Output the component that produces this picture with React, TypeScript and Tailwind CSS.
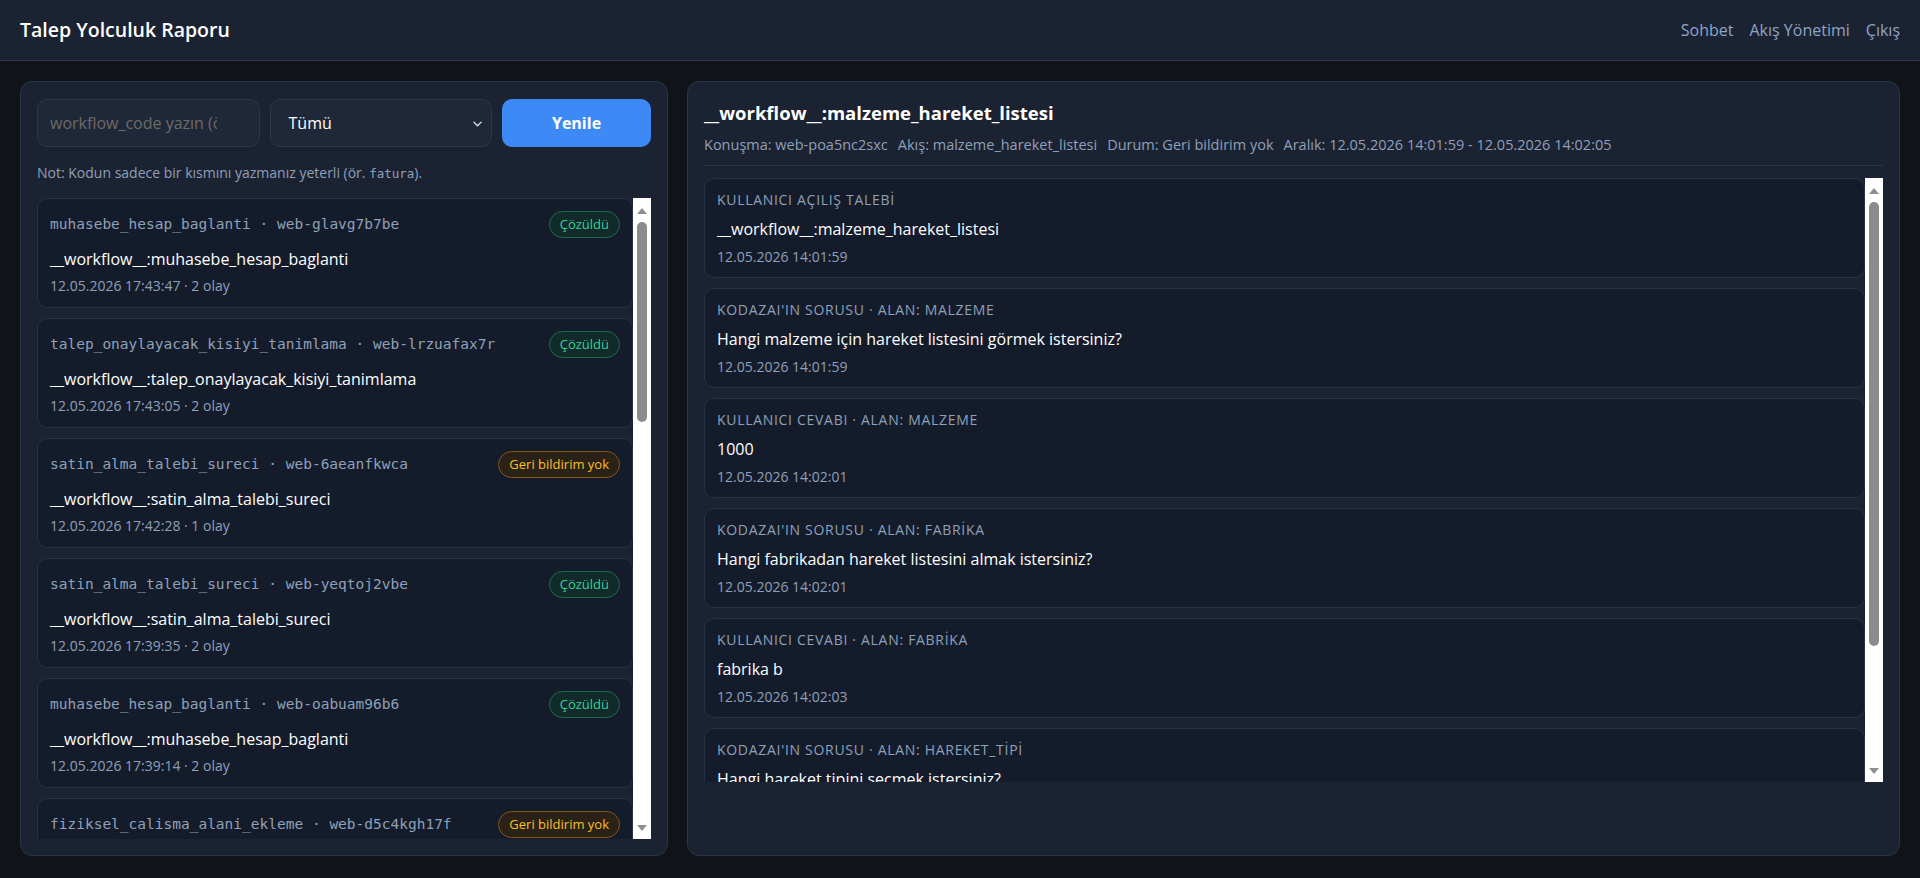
import React from 'react';

type Session = {
  code: string;
  conv: string;
  status: 'ok' | 'none';
  title: string;
  meta: string;
};

const sessions: Session[] = [
  { code: 'muhasebe_hesap_baglanti', conv: 'web-glavg7b7be', status: 'ok', title: '__workflow__:muhasebe_hesap_baglanti', meta: '12.05.2026 17:43:47 · 2 olay' },
  { code: 'talep_onaylayacak_kisiyi_tanimlama', conv: 'web-lrzuafax7r', status: 'ok', title: '__workflow__:talep_onaylayacak_kisiyi_tanimlama', meta: '12.05.2026 17:43:05 · 2 olay' },
  { code: 'satin_alma_talebi_sureci', conv: 'web-6aeanfkwca', status: 'none', title: '__workflow__:satin_alma_talebi_sureci', meta: '12.05.2026 17:42:28 · 1 olay' },
  { code: 'satin_alma_talebi_sureci', conv: 'web-yeqtoj2vbe', status: 'ok', title: '__workflow__:satin_alma_talebi_sureci', meta: '12.05.2026 17:39:35 · 2 olay' },
  { code: 'muhasebe_hesap_baglanti', conv: 'web-oabuam96b6', status: 'ok', title: '__workflow__:muhasebe_hesap_baglanti', meta: '12.05.2026 17:39:14 · 2 olay' },
  { code: 'fiziksel_calisma_alani_ekleme', conv: 'web-d5c4kgh17f', status: 'none', title: '__workflow__:fiziksel_calisma_alani_ekleme', meta: '12.05.2026 17:38:02 · 1 olay' },
];

const events = [
  { label: 'KULLANICI AÇILIŞ TALEBİ', text: '__workflow__:malzeme_hareket_listesi', at: '12.05.2026 14:01:59' },
  { label: "KODAZAI'IN SORUSU · ALAN: MALZEME", text: 'Hangi malzeme için hareket listesini görmek istersiniz?', at: '12.05.2026 14:01:59' },
  { label: 'KULLANICI CEVABI · ALAN: MALZEME', text: '1000', at: '12.05.2026 14:02:01' },
  { label: "KODAZAI'IN SORUSU · ALAN: FABRİKA", text: 'Hangi fabrikadan hareket listesini almak istersiniz?', at: '12.05.2026 14:02:01' },
  { label: 'KULLANICI CEVABI · ALAN: FABRİKA', text: 'fabrika b', at: '12.05.2026 14:02:03' },
  { label: "KODAZAI'IN SORUSU · ALAN: HAREKET_TİPİ", text: 'Hangi hareket tipini seçmek istersiniz?', at: '12.05.2026 14:02:05' },
];

// classic light scrollbar drawn next to the clipped lists
const Rail = ({ thumb }: { thumb: string }) => (
  <div className="w-[18px] shrink-0 bg-white flex flex-col items-center">
    <svg width="10" height="6" viewBox="0 0 10 6" className="mt-[10px]">
      <polygon points="0,6 5,0 10,6" fill="#8f8f8f" />
    </svg>
    <div className={`mt-[8px] w-[10px] rounded-full bg-[#8c8c8c] ${thumb}`} />
    <div className="flex-1" />
    <svg width="10" height="6" viewBox="0 0 10 6" className="mb-[8px]">
      <polygon points="0,0 10,0 5,6" fill="#8f8f8f" />
    </svg>
  </div>
);

const Badge = ({ status }: { status: Session['status'] }) =>
  status === 'ok' ? (
    <span className="h-[27px] px-[10px] flex items-center rounded-full border border-[#1f6b50] bg-[#112a2a] text-[#34d399] text-[13px]">
      Çözüldü
    </span>
  ) : (
    <span className="h-[27px] px-[10px] flex items-center rounded-full border border-[#86561d] bg-[#2a2217] text-[#fbbf24] text-[13px]">
      Geri bildirim yok
    </span>
  );

export default function App() {
  return (
    <div className="h-[878px] flex flex-col bg-[#101418] font-['Open_Sans','Noto_Sans',sans-serif] text-white overflow-hidden">
      <header className="h-[61px] shrink-0 flex items-center justify-between px-5 bg-[#1b2232] border-b border-[#2b3650]">
        <h1 className="text-[19.5px] font-semibold">Talep Yolculuk Raporu</h1>
        <nav className="flex items-center gap-4 text-[16px] text-[#8ea5c8]">
          <a>Sohbet</a>
          <a>Akış Yönetimi</a>
          <a>Çıkış</a>
        </nav>
      </header>

      <main className="flex-1 min-h-0 grid grid-cols-[648px_1fr] gap-[19px] px-5 pt-5 pb-[22px]">
        {/* sessions */}
        <section className="min-h-0 flex flex-col rounded-xl border border-[#2b3548] bg-[#1b2232] px-4 pt-[17px] pb-4">
          <div className="grid grid-cols-[1fr_1fr_149px] gap-[10px]">
            <input
              placeholder="workflow_code yazın (ör. fatura)"
              className="h-12 min-w-0 rounded-[10px] border border-[#2c3749] bg-[#1f2839] pl-3 pr-[42px] text-[16px] text-white outline-none placeholder:text-[#6f6a66]"
            />
            <div className="h-12 flex items-center justify-between rounded-[10px] border border-[#2c3749] bg-[#1f2839] pl-[18px] pr-[8px] text-[16px]">
              <span>Tümü</span>
              <svg width="11" height="11" viewBox="0 0 12 12" fill="none">
                <path d="M2 4.5 6 8.5 10 4.5" stroke="#e5e7eb" strokeWidth="1.4" strokeLinecap="round" strokeLinejoin="round" />
              </svg>
            </div>
            <button className="h-12 rounded-[10px] bg-[#3d8af7] text-[16px] font-bold">Yenile</button>
          </div>

          <p className="mt-4 text-[14px] leading-5 text-[#8fa0b8]">
            Not: Kodun sadece bir kısmını yazmanız yeterli (ör.{' '}
            <code className="font-['DejaVu_Sans_Mono',monospace] text-[12.5px]">fatura</code>).
          </p>

          <div className="mt-[14px] flex-1 min-h-0 flex">
            <div className="flex-1 min-w-0 overflow-hidden flex flex-col gap-[10px]">
              {sessions.map((s, i) => (
                <div key={i} className="shrink-0 h-[110px] rounded-[10px] border border-[#273246] bg-[#141c2b] px-3 pt-3">
                  <div className="h-[27px] flex items-center justify-between">
                    <span className="font-['DejaVu_Sans_Mono',monospace] text-[14.5px] text-[#8fa0b8]">
                      {s.code} · {s.conv}
                    </span>
                    <Badge status={s.status} />
                  </div>
                  <div className="mt-[9px] text-[16px] leading-6">{s.title}</div>
                  <div className="mt-[5px] text-[14px] leading-5 text-[#8fa0b8]">{s.meta}</div>
                </div>
              ))}
            </div>
            <Rail thumb="h-[200px]" />
          </div>
        </section>

        {/* journey detail */}
        <section className="min-h-0 flex flex-col rounded-xl border border-[#2b3548] bg-[#1b2232] px-4 pt-[17px] pb-4">
          <h2 className="text-[18.5px] leading-7 font-bold">__workflow__:malzeme_hareket_listesi</h2>
          <div className="mt-2 pb-[10px] border-b border-[#2b3546] flex flex-wrap gap-x-[10px] text-[14.5px] leading-5 text-[#8fa0b8]">
            <span>Konuşma: web-poa5nc2sxc</span>
            <span>Akış: malzeme_hareket_listesi</span>
            <span>Durum: Geri bildirim yok</span>
            <span>Aralık: 12.05.2026 14:01:59 - 12.05.2026 14:02:05</span>
          </div>

          <div className="mt-3 h-[604px] flex">
            <div className="flex-1 min-w-0 overflow-hidden flex flex-col gap-[10px]">
              {events.map((e, i) => (
                <div key={i} className="shrink-0 h-[100px] rounded-[10px] border border-[#273246] bg-[#141c2b] px-3 pt-3">
                  <div className="text-[14px] leading-[18px] text-[#8fa0b8] tracking-[0.7px]">{e.label}</div>
                  <div className="mt-2 text-[16px] leading-6">{e.text}</div>
                  <div className="mt-[6px] text-[14px] leading-5 text-[#8fa0b8]">{e.at}</div>
                </div>
              ))}
            </div>
            <Rail thumb="h-[444px]" />
          </div>
        </section>
      </main>
    </div>
  );
}
